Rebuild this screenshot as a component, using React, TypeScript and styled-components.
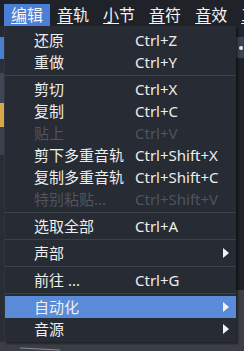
import React from "react";
import styled, { createGlobalStyle } from "styled-components";

const GlobalStyle = createGlobalStyle`
  html, body { margin: 0; padding: 0; background: #1f2229; overflow: hidden; }
  body { font-family: "Noto Sans", "Noto Sans CJK SC", sans-serif; }
  #root { width: 244px; height: 351px; }
`;

const Screen = styled.div`
  position: relative;
  width: 244px;
  height: 351px;
  overflow: hidden;
  display: flex;
  flex-direction: column;
  background: #24272e;
`;

const MenuBar = styled.div`
  flex: none;
  display: flex;
  align-items: flex-end;
  height: 26px;
  padding-left: 4px;
  background: #1f2229;
  white-space: nowrap;
`;

const MenuTitle = styled.div<{ $active?: boolean }>`
  flex: none;
  height: 22px;
  line-height: 22px;
  padding: 0 7px;
  font-size: 16px;
  color: #f4f4f4;
  background: ${(p) => (p.$active ? "#4a7fd5" : "transparent")};
`;

const Mnemonic = styled.span`
  text-decoration: underline;
  text-underline-offset: 2px;
`;

const Workspace = styled.div`
  flex: 1;
  display: flex;
  flex-direction: column;
`;

const Panels = styled.div`
  flex: 1;
  display: flex;
`;

const SideStrip = styled.div<{ $w: number }>`
  flex: none;
  width: ${(p) => p.$w}px;
  display: flex;
  flex-direction: column;
`;

const Block = styled.div<{ $h?: number; $bg: string }>`
  flex: ${(p) => (p.$h ? "none" : "1")};
  height: ${(p) => (p.$h ? `${p.$h}px` : "auto")};
  background: ${(p) => p.$bg};
  position: relative;
`;

const Dot = styled.div`
  position: absolute;
  left: 3px;
  top: 9px;
  width: 4px;
  height: 4px;
  border-radius: 50%;
  background: #e6e6e6;
`;

const Canvas = styled.div`
  flex: 1;
  background: #2a2d34;
`;

const BottomLane = styled.div`
  flex: none;
  height: 9px;
  background: #3b3e45;
  display: flex;
`;

const Dropdown = styled.div`
  position: absolute;
  left: 4px;
  top: 26px;
  width: 232px;
  height: 316px;
  box-sizing: border-box;
  padding: 3px 0 2px;
  background: #272b33;
  border-left: 1px solid #30343c;
  box-shadow: 2px 2px 2px rgba(0, 0, 0, 0.45);
  display: flex;
  flex-direction: column;
`;

const Item = styled.div<{ $active?: boolean; $disabled?: boolean }>`
  flex: none;
  display: flex;
  align-items: center;
  height: 22px;
  padding: 0 7px 0 29px;
  font-size: 15px;
  line-height: 22px;
  white-space: nowrap;
  color: ${(p) => (p.$disabled ? "#4f545d" : "#eeeeee")};
  background: ${(p) => (p.$active ? "#5a8bd8" : "transparent")};
`;

const Label = styled.span`
  flex: none;
  width: 101px;
`;

const Shortcut = styled.span`
  flex: 1;
`;

const Separator = styled.div`
  flex: none;
  height: 1px;
  margin: 2px 0;
  background: #3b4049;
`;

const ArrowIcon = () => (
  <svg width="6" height="10" viewBox="0 0 6 10">
    <polygon points="0,0 6,5 0,10" fill="#f2f2f2" />
  </svg>
);

type Entry =
  | { sep: true }
  | { label: string; shortcut?: string; disabled?: boolean; sub?: boolean; active?: boolean };

const entries: Entry[] = [
  { label: "还原", shortcut: "Ctrl+Z" },
  { label: "重做", shortcut: "Ctrl+Y" },
  { sep: true },
  { label: "剪切", shortcut: "Ctrl+X" },
  { label: "复制", shortcut: "Ctrl+C" },
  { label: "贴上", shortcut: "Ctrl+V", disabled: true },
  { label: "剪下多重音轨", shortcut: "Ctrl+Shift+X" },
  { label: "复制多重音轨", shortcut: "Ctrl+Shift+C" },
  { label: "特别粘贴...", shortcut: "Ctrl+Shift+V", disabled: true },
  { sep: true },
  { label: "选取全部", shortcut: "Ctrl+A" },
  { sep: true },
  { label: "声部", sub: true },
  { sep: true },
  { label: "前往 ...", shortcut: "Ctrl+G" },
  { sep: true },
  { label: "自动化", sub: true, active: true },
  { label: "音源", sub: true },
];

const titles = ["编辑", "音轨", "小节", "音符", "音效", "工具"];

export default function App() {
  return (
    <>
      <GlobalStyle />
      <Screen>
        <MenuBar>
          {titles.map((t, i) => (
            <MenuTitle key={t} $active={i === 0}>
              <Mnemonic>{t[0]}</Mnemonic>
              {t.slice(1)}
            </MenuTitle>
          ))}
        </MenuBar>
        <Workspace>
          <Panels>
            <SideStrip $w={4}>
              <Block $h={11} $bg="#262a32" />
              <Block $h={22} $bg="#4b7dd0" />
              <Block $h={14} $bg="#2b2f37" />
              <Block $h={30} $bg="#3f4654" />
              <Block $h={24} $bg="#d7a94c" />
              <Block $h={28} $bg="#3a404c" />
              <Block $bg="#2a2d34" />
            </SideStrip>
            <Canvas />
            <SideStrip $w={8}>
              <Block $h={11} $bg="#22252c" />
              <Block $h={21} $bg="#3b4355">
                <Dot />
              </Block>
              <Block $h={232} $bg="#1f2228" />
              <Block $bg="#3b3e45" />
            </SideStrip>
          </Panels>
          <BottomLane>
            <svg width="244" height="9" viewBox="0 0 244 9">
              <path d="M20 6 L60 8" stroke="#8a8d93" strokeWidth="1" fill="none" />
            </svg>
          </BottomLane>
        </Workspace>
        <Dropdown>
          {entries.map((e, i) =>
            "sep" in e ? (
              <Separator key={i} />
            ) : (
              <Item key={i} $active={e.active} $disabled={e.disabled}>
                <Label>{e.label}</Label>
                <Shortcut>{e.shortcut}</Shortcut>
                {e.sub && <ArrowIcon />}
              </Item>
            )
          )}
        </Dropdown>
      </Screen>
    </>
  );
}
